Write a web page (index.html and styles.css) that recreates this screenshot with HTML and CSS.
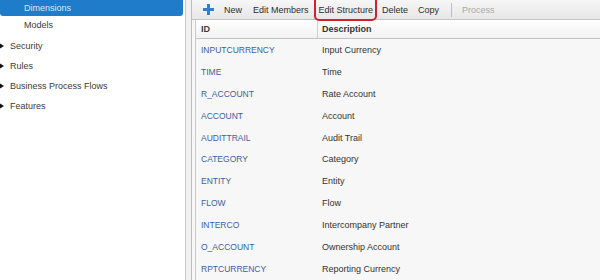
FILE: index.html
```html
<!DOCTYPE html>
<html>
<head>
<meta charset="utf-8">
<link rel="stylesheet" href="styles.css">
</head>
<body>
<div class="app">
  <aside class="nav">
    <div class="nav-item sub selected">Dimensions</div>
    <div class="nav-item sub">Models</div>
    <div class="nav-item"><span class="tri"></span>Security</div>
    <div class="nav-item"><span class="tri"></span>Rules</div>
    <div class="nav-item"><span class="tri"></span>Business Process Flows</div>
    <div class="nav-item"><span class="tri"></span>Features</div>
  </aside>
  <div class="splitter"></div>
  <main class="main">
    <div class="toolbar">
      <span class="tb-btn new"><svg class="plus" width="11" height="11" viewBox="0 0 11 11"><path d="M4 0h3v4h4v3H7v4H4V7H0V4h4z" fill="#2f7fcf"/></svg>New</span>
      <span class="tb-btn">Edit Members</span>
      <span class="tb-btn highlight">Edit Structure</span>
      <span class="tb-btn">Delete</span>
      <span class="tb-btn">Copy</span>
      <span class="tb-sep"></span>
      <span class="tb-btn disabled">Process</span>
    </div>
    <div class="grid">
      <div class="row head"><div class="c-id">ID</div><div class="c-desc">Description</div></div>
      <div class="row"><div class="c-id">INPUTCURRENCY</div><div class="c-desc">Input Currency</div></div>
      <div class="row"><div class="c-id">TIME</div><div class="c-desc">Time</div></div>
      <div class="row"><div class="c-id">R_ACCOUNT</div><div class="c-desc">Rate Account</div></div>
      <div class="row"><div class="c-id">ACCOUNT</div><div class="c-desc">Account</div></div>
      <div class="row"><div class="c-id">AUDITTRAIL</div><div class="c-desc">Audit Trail</div></div>
      <div class="row"><div class="c-id">CATEGORY</div><div class="c-desc">Category</div></div>
      <div class="row"><div class="c-id">ENTITY</div><div class="c-desc">Entity</div></div>
      <div class="row"><div class="c-id">FLOW</div><div class="c-desc">Flow</div></div>
      <div class="row"><div class="c-id">INTERCO</div><div class="c-desc">Intercompany Partner</div></div>
      <div class="row"><div class="c-id">O_ACCOUNT</div><div class="c-desc">Ownership Account</div></div>
      <div class="row"><div class="c-id">RPTCURRENCY</div><div class="c-desc">Reporting Currency</div></div>
    </div>
  </main>
</div>
</body>
</html>
```
FILE: styles.css
```css
* { box-sizing: border-box; }
html, body { margin: 0; padding: 0; }
body {
  width: 600px;
  height: 280px;
  overflow: hidden;
  background: #f7f7f7;
  font-family: "Liberation Sans", Arial, sans-serif;
  font-size: 9px;
  color: #333;
}
.app { display: flex; height: 280px; }
.nav {
  width: 186px;
  flex: none;
  background: #fff;
  border-right: 1px solid #c9c9c9;
}
.nav-item {
  height: 20px;
  display: flex;
  align-items: center;
  padding-left: 0;
  color: #3a3a3a;
  font-size: 9px;
}
.nav-item.sub { padding-left: 24px; height: 18px; }
.nav-item.selected {
  height: 16px;
  margin-right: 2px;
  background: #1f7ccb;
  color: #dbe9f7;
  border-radius: 0 0 3px 3px;
  margin-bottom: 1px;
}
.nav-item.sub:nth-child(2) { height: 16px; margin-bottom: 3px; }
.tri {
  width: 0; height: 0;
  border-top: 3.5px solid transparent;
  border-bottom: 3.5px solid transparent;
  border-left: 5px solid #111;
  margin-left: -1px;
  margin-right: 6px;
}
.splitter {
  width: 5px;
  flex: none;
  background: #f1f1f1;
}
.main {
  flex: 1;
  border-left: 1px solid #bdbdbd;
  display: flex;
  flex-direction: column;
  background: #f7f7f7;
}
.toolbar {
  height: 20px;
  display: flex;
  align-items: center;
  padding-left: 11px;
  background: linear-gradient(#f6f6f6, #e7e7e7);
  border-bottom: 1px solid #c4c4c4;
  font-size: 9px;
  color: #2d2d2d;
}
.tb-btn { display: flex; align-items: center; margin-right: 10px; position: relative; white-space: nowrap; }
.plus { margin-right: 10px; }
.tb-btn.new { margin-right: 11px; }
.tb-btn.highlight::after {
  content: "";
  position: absolute;
  left: -5px; right: -4px;
  top: -9px; bottom: -6px;
  border: 2.5px solid #d2202c;
  border-radius: 5px;
}
.tb-btn.highlight { margin-right: 9px; }
.tb-sep { width: 1px; height: 14px; background: #bdbdbd; margin: 0 10px 0 2px; }
.tb-btn.disabled { color: #a9a9a9; }
.grid {
  flex: 1;
  margin-left: 3px;
  border-left: 1px solid #c9c9c9;
}
.row {
  display: flex;
  height: 21.9px;
  align-items: center;
}
.row.head {
  height: 19px;
  background: linear-gradient(#ffffff, #f1f1f1);
  border-bottom: 1px solid #c3c3c3;
  font-weight: bold;
  color: #3b3b3b;
  align-items: stretch;
}
.row.head > div { display: flex; align-items: center; }
.c-id {
  width: 122px;
  padding-left: 5px;
  color: #3d60a3;
  font-size: 8.5px;
}
.row.head .c-id { color: #3b3b3b; font-size: 9px; border-right: 1px solid #cfcfcf; }
.c-desc { padding-left: 4px; color: #333; }
```
